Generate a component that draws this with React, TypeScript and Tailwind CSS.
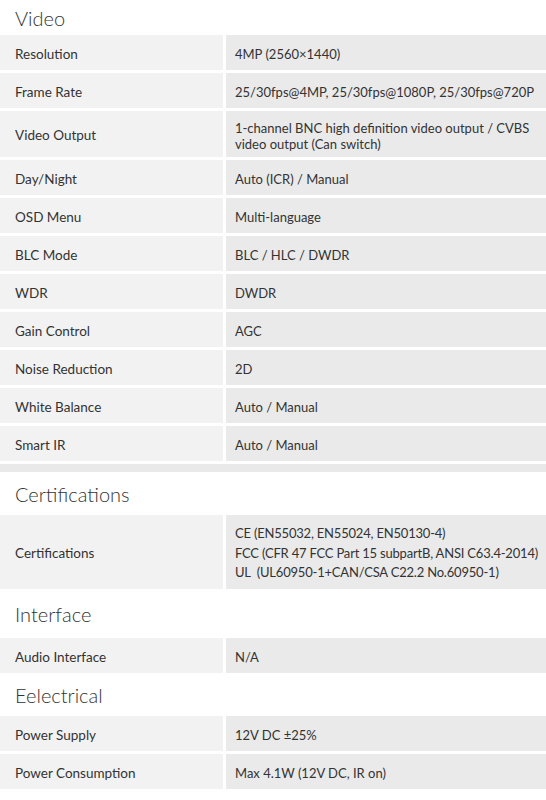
const font = { fontFamily: 'Lato, "Open Sans", sans-serif' }

type Row = { label: string; value: string[]; h?: string }

const video: Row[] = [
  { label: 'Resolution', value: ['4MP (2560×1440)'] },
  { label: 'Frame Rate', value: ['25/30fps@4MP, 25/30fps@1080P, 25/30fps@720P'] },
  {
    label: 'Video Output',
    value: ['1-channel BNC high definition video output / CVBS', 'video output (Can switch)'],
    h: 'h-[46px]',
  },
  { label: 'Day/Night', value: ['Auto (ICR) / Manual'] },
  { label: 'OSD Menu', value: ['Multi-language'] },
  { label: 'BLC Mode', value: ['BLC / HLC / DWDR'] },
  { label: 'WDR', value: ['DWDR'] },
  { label: 'Gain Control', value: ['AGC'] },
  { label: 'Noise Reduction', value: ['2D'] },
  { label: 'White Balance', value: ['Auto / Manual'] },
  { label: 'Smart IR', value: ['Auto / Manual'] },
]

function SpecRow({ row }: { row: Row }) {
  const h = row.h ?? 'h-[35px]'
  return (
    <div className={`flex gap-[3px] ${h}`}>
      <div className="w-[223px] shrink-0 bg-[#f2f2f2] flex items-center pl-[15px] pt-[3px] text-[13.5px] text-[#333]">
        {row.label}
      </div>
      <div className="flex-1 bg-[#eaeaea] flex flex-col justify-center pl-[9px] pt-[3px] text-[13px] leading-[16px] text-[#333] whitespace-nowrap">
        {row.value.map((v) => (
          <div key={v}>{v}</div>
        ))}
      </div>
    </div>
  )
}

function Heading({ title, h }: { title: string; h: string }) {
  return (
    <div className={`${h} flex items-center pl-[15px] pt-[1px] text-[20px] font-light text-[#333]`}>{title}</div>
  )
}

export default function App() {
  return (
    <div className="w-[546px] h-[800px] bg-white overflow-hidden" style={font}>
      <Heading title="Video" h="h-[35px]" />
      <div className="flex flex-col gap-[3px]">
        {video.map((r) => (
          <SpecRow key={r.label} row={r} />
        ))}
      </div>
      <div className="h-[3px]" />
      <div className="h-[8px] bg-[#e9e9e9]" />
      <Heading title="Certifications" h="h-[43px]" />
      <div className="flex gap-[3px] h-[74px]">
        <div className="w-[223px] shrink-0 bg-[#f2f2f2] flex items-center pl-[15px] pt-[3px] text-[13.5px] text-[#333]">
          Certifications
        </div>
        <div className="flex-1 bg-[#eaeaea] flex flex-col justify-center pl-[9px] pt-[3px] text-[13px] tracking-[-0.2px] leading-[19.5px] text-[#333] whitespace-nowrap">
          <div>CE (EN55032, EN55024, EN50130-4)</div>
          <div>FCC (CFR 47 FCC Part 15 subpartB, ANSI C63.4-2014)</div>
          <div>UL&nbsp; (UL60950-1+CAN/CSA C22.2 No.60950-1)</div>
        </div>
      </div>
      <Heading title="Interface" h="h-[49px]" />
      <SpecRow row={{ label: 'Audio Interface', value: ['N/A'] }} />
      <Heading title="Eelectrical" h="h-[43px]" />
      <div className="flex flex-col gap-[3px]">
        <SpecRow row={{ label: 'Power Supply', value: ['12V DC ±25%'] }} />
        <SpecRow row={{ label: 'Power Consumption', value: ['Max 4.1W (12V DC, IR on)'] }} />
      </div>
    </div>
  )
}
